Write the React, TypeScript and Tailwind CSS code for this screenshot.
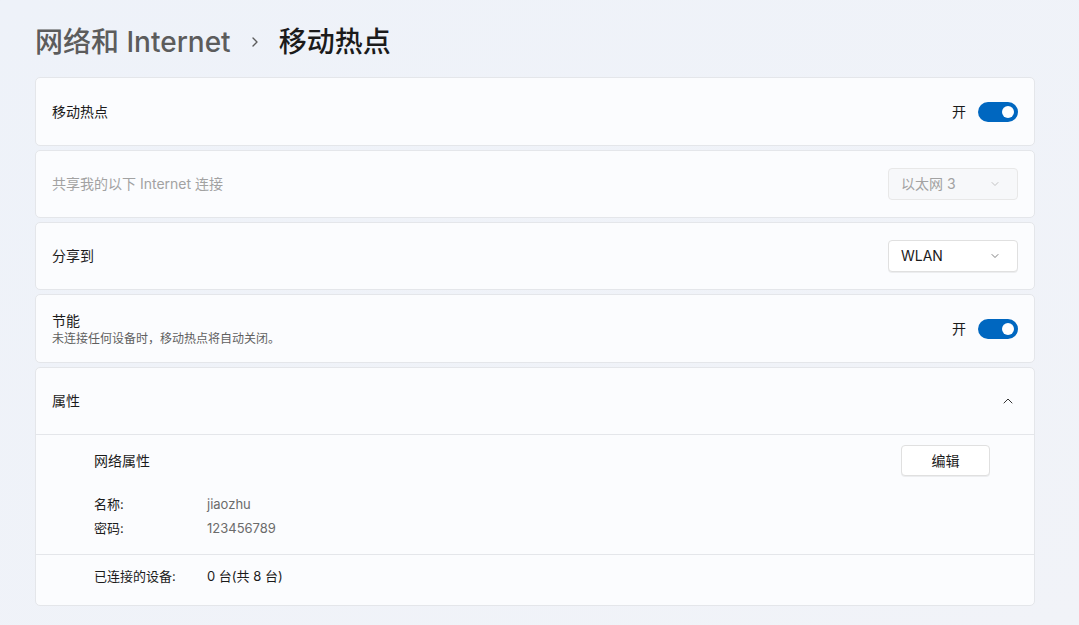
import { ChevronDown, ChevronUp, ChevronRight } from "lucide-react";

const font = {
  fontFamily: '"Segoe UI", Inter, "Noto Sans CJK SC", sans-serif',
};

function Toggle() {
  return (
    <div className="flex items-center gap-3">
      <span className="text-sm text-[#1b1b1b]">开</span>
      <div className="w-10 h-5 rounded-full bg-[#0067c0] flex items-center justify-end pr-[4px]">
        <div className="w-3 h-3 rounded-full bg-white" />
      </div>
    </div>
  );
}

function Select({ label, disabled }: { label: string; disabled?: boolean }) {
  return (
    <div
      className={`w-[130px] h-[32px] rounded-[4px] border flex items-center justify-between pl-3 pr-4 ${
        disabled
          ? "bg-[#f7f8fa] border-[#e8e8e8] text-[#a2a2a2]"
          : "bg-white border-[#e0e0e0] text-[#1b1b1b] shadow-[0_1px_0_rgba(0,0,0,0.06)]"
      }`}
    >
      <span className="text-sm">{label}</span>
      <ChevronDown
        className={`w-3 h-3 ${disabled ? "text-[#b0b0b0]" : "text-[#555]"}`}
        strokeWidth={1.5}
      />
    </div>
  );
}

function Card({ children }: { children: React.ReactNode }) {
  return (
    <div className="bg-[#fbfcfe] border border-[#e4e6ea] rounded-[5px]">
      {children}
    </div>
  );
}

export default function App() {
  return (
    <div
      style={font}
      className="w-[1079px] h-[625px] bg-gradient-to-br from-[#eef2f9] to-[#f1f3f8] pl-[35px] pr-[44px] overflow-hidden"
    >
      <div className="h-[77px] flex items-center pt-[7px] gap-[14px] text-[28px] font-medium">
        <span className="text-[#5c5c5c]">网络和 Internet</span>
        <ChevronRight className="w-4 h-4 text-[#5c5c5c] mx-[2px]" strokeWidth={2} />
        <span className="text-[#1b1b1b]">移动热点</span>
      </div>

      <div className="flex flex-col gap-[4px]">
        <Card>
          <div className="h-[67px] flex items-center justify-between pl-4 pr-4">
            <span className="text-sm text-[#1b1b1b]">移动热点</span>
            <Toggle />
          </div>
        </Card>

        <Card>
          <div className="h-[66px] flex items-center justify-between pl-4 pr-4">
            <span className="text-sm text-[#a2a2a2]">共享我的以下 Internet 连接</span>
            <Select label="以太网 3" disabled />
          </div>
        </Card>

        <Card>
          <div className="h-[66px] flex items-center justify-between pl-4 pr-4">
            <span className="text-sm text-[#1b1b1b]">分享到</span>
            <Select label="WLAN" />
          </div>
        </Card>

        <Card>
          <div className="h-[67px] flex items-center justify-between pl-4 pr-4">
            <div className="flex flex-col">
              <span className="text-sm text-[#1b1b1b] leading-5">节能</span>
              <span className="text-xs text-[#5f5f5f] leading-4">
                未连接任何设备时，移动热点将自动关闭。
              </span>
            </div>
            <Toggle />
          </div>
        </Card>

        <Card>
          <div className="h-[67px] flex items-center justify-between pl-4 pr-[18px] border-b border-[#e4e6ea]">
            <span className="text-sm text-[#1b1b1b]">属性</span>
            <ChevronUp className="w-4 h-4 text-[#333]" strokeWidth={1.5} />
          </div>
          <div className="pl-[58px] pr-[44px] pt-[10px] pb-[16px] border-b border-[#e4e6ea]">
            <div className="flex items-center justify-between h-[31px]">
              <span className="text-sm text-[#1b1b1b]">网络属性</span>
              <div className="w-[89px] h-[31px] rounded-[4px] bg-white border border-[#e0e0e0] shadow-[0_1px_0_rgba(0,0,0,0.06)] flex items-center justify-center text-sm text-[#1b1b1b]">
                编辑
              </div>
            </div>
            <div className="mt-[18px] grid grid-cols-[113px_1fr] gap-y-[4px] text-[13px] leading-5">
              <span className="text-[#1b1b1b]">名称:</span>
              <span className="text-[#6b6b6b]">jiaozhu</span>
              <span className="text-[#1b1b1b]">密码:</span>
              <span className="text-[#6b6b6b]">123456789</span>
            </div>
          </div>
          <div className="h-[50px] pl-[58px] pt-[11px] flex items-start text-[13px] leading-5">
            <span className="w-[113px] text-[#1b1b1b]">已连接的设备:</span>
            <span className="text-[#1b1b1b]">0 台(共 8 台)</span>
          </div>
        </Card>
      </div>
    </div>
  );
}
